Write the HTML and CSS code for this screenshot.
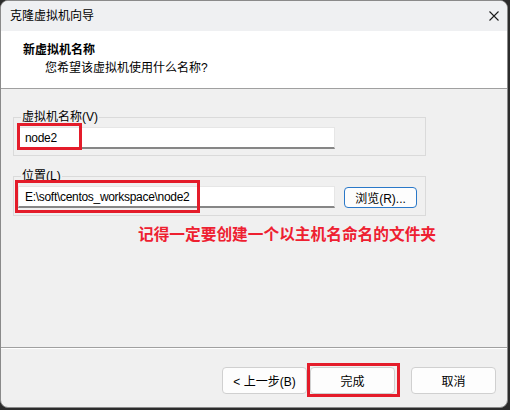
FILE: index.html
```html
<!doctype html>
<html>
  <head>
    <meta charset="UTF-8" />
    <title>克隆虚拟机向导</title>
    <link rel="stylesheet" href="styles.css">
  </head>
  <body>
    <div class="window">
      <div class="title-bar">
        <span class="title">克隆虚拟机向导</span>
        <button class="close-btn" aria-label="关闭">
          <svg width="10" height="10" viewBox="0 0 10 10">
            <path d="M0.5 0.5 L9.5 9.5 M9.5 0.5 L0.5 9.5" stroke="#1b1b1b" stroke-width="1.1" fill="none" />
          </svg>
        </button>
      </div>

      <div class="header">
        <div class="header-title">新虚拟机名称</div>
        <div class="header-sub">您希望该虚拟机使用什么名称?</div>
      </div>

      <div class="content">
        <fieldset class="group">
          <legend>虚拟机名称(V)</legend>
          <div class="field">
            <input class="text-input" type="text" value="node2" />
            <div class="mark mark-name"></div>
          </div>
        </fieldset>

        <fieldset class="group group-location">
          <legend>位置(L)</legend>
          <div class="row">
            <div class="field">
              <input class="text-input" type="text" value="E:\soft\centos_workspace\node2" />
              <div class="mark mark-path"></div>
            </div>
            <button class="btn btn-browse">浏览(R)...</button>
          </div>
        </fieldset>

        <div class="note">记得一定要创建一个以主机名命名的文件夹</div>
      </div>

      <div class="footer">
        <button class="btn">&lt; 上一步(B)</button>
        <div class="field">
          <button class="btn">完成</button>
          <div class="mark mark-finish"></div>
        </div>
        <button class="btn btn-cancel">取消</button>
      </div>
    </div>
  </body>
</html>
```

FILE: styles.css
```css
html,
body {
  margin: 0;
  height: 100%;
}

body {
  background: #2c2c2c;
  font-family: "Liberation Sans", "Noto Sans CJK SC", sans-serif;
  font-size: 12px;
  color: #000;
  overflow: hidden;
}

.window {
  width: 506px;
  height: 406px;
  border: 1px solid #8a8a8a;
  border-radius: 8px;
  background: #f0f0f0;
  display: flex;
  flex-direction: column;
  overflow: hidden;
}

.title-bar {
  height: 30px;
  background: #eff0f2;
  display: flex;
  align-items: center;
  justify-content: space-between;
  padding: 0 8px 0 9px;
}

.title {
  line-height: 16px;
}

.close-btn {
  border: none;
  background: none;
  padding: 0;
  width: 10px;
  height: 10px;
  display: flex;
}

.header {
  background: #fff;
  border-bottom: 1px solid #a0a0a0;
  padding: 11px 0 0 22px;
  box-sizing: border-box;
  height: 58px;
}

.header-title {
  font-weight: bold;
  line-height: 16px;
}

.header-sub {
  line-height: 16px;
  margin-top: 2px;
  padding-left: 22px;
}

.content {
  flex: 1;
  padding: 20px 0 0 12px;
}

/* group boxes with the caption sitting on the top border */
.group {
  width: 403px;
  margin: 0;
  padding: 2px 4px 6px 4px;
  border: 1px solid #dadada;
  min-inline-size: 0;
}

.group legend {
  margin-left: 3px;
  padding: 0 1px;
  line-height: 16px;
}

.group-location {
  margin-top: 12px;
  padding-bottom: 7px;
}

.row {
  display: flex;
  align-items: center;
  gap: 9px;
}

.field {
  position: relative;
  display: flex;
}

.text-input {
  width: 317px;
  height: 22px;
  box-sizing: border-box;
  border: 1px solid #e6e6e6;
  border-bottom: 2px solid #868686;
  background: #fff;
  font: inherit;
  letter-spacing: -0.3px;
  padding: 0 6px;
  margin: 0;
  outline: none;
}

.btn {
  font: inherit;
  color: #000;
  width: 85px;
  height: 27px;
  background: #fdfdfd;
  border: 1px solid #d0d0d0;
  border-radius: 4px;
  padding: 0;
}

.btn-browse {
  width: 73px;
  height: 21px;
  border-color: #2a78c8;
}

/* red annotation frames */
.mark {
  position: absolute;
  border: 3px solid #e41c2a;
  box-sizing: border-box;
  pointer-events: none;
}

.mark-name {
  left: -1px;
  top: -4px;
  width: 65px;
  height: 27px;
}

.mark-path {
  left: -3px;
  top: -6px;
  width: 185px;
  height: 33px;
}

.mark-finish {
  left: -3px;
  top: -4px;
  width: 93px;
  height: 34px;
}

.note {
  margin-top: 9px;
  padding-left: 125px;
  color: #ee2030;
  font-weight: bold;
  font-size: 15.7px;
  line-height: 20px;
}

.footer {
  border-top: 1px solid #a0a0a0;
  box-shadow: inset 0 1px #fff;
  display: flex;
  justify-content: flex-end;
  align-items: flex-start;
  padding: 19px 11px 0 0;
  box-sizing: border-box;
  height: 60px;
  gap: 3px;
}

.btn-cancel {
  margin-left: 13px;
}
```
